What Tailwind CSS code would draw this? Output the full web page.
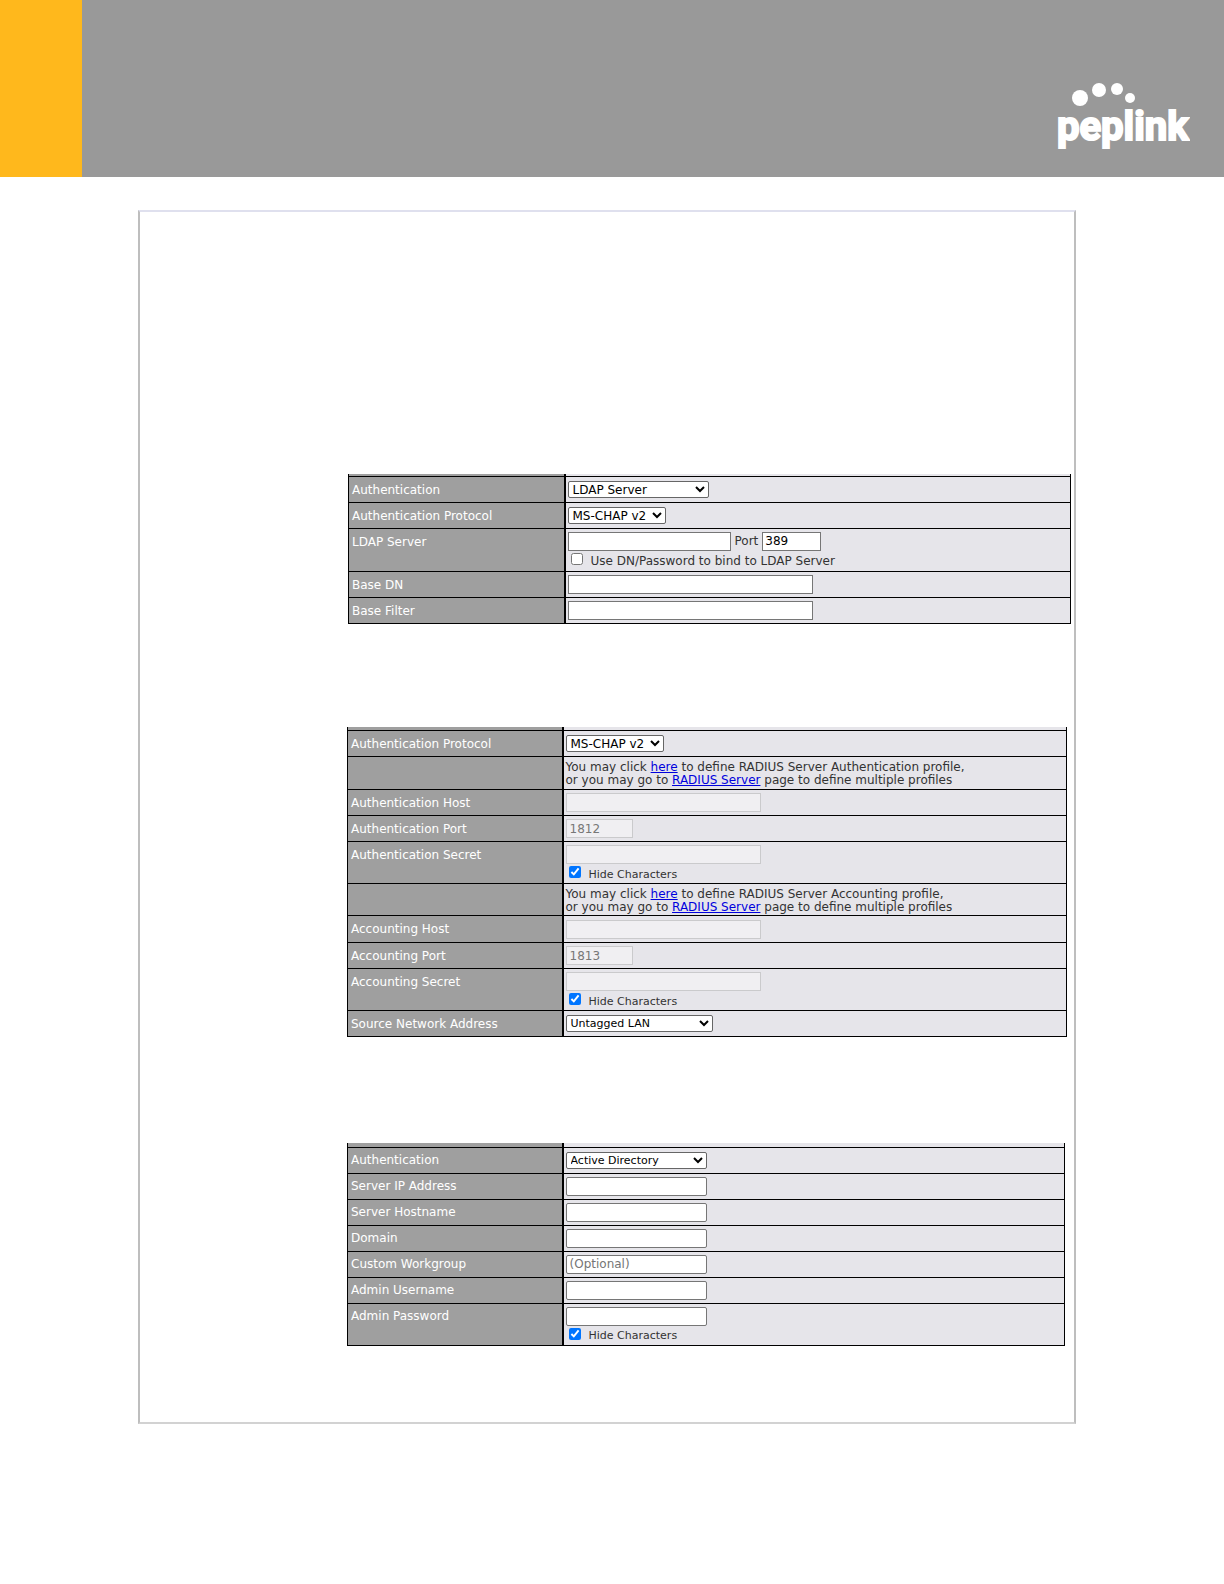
<!DOCTYPE html>
<html lang="en">

<head>
    <meta charset="UTF-8">
    <title>Peplink - Authentication Settings</title>
    <script src="https://cdn.jsdelivr.net/npm/@tailwindcss/browser@4"></script>
</head>

<body class="bg-white font-['DejaVu_Sans',Verdana,sans-serif] text-[12px] leading-[13px] text-[#333]">
    <header class="flex h-[177px] bg-[#999]">
        <div class="w-[82px] bg-[#ffb81c]"></div>
        <a href="#" class="ml-auto mt-[80px] mr-[34px]" aria-label="peplink">
            <svg width="134" height="76" viewBox="0 0 134 76" fill="#fff">
                <circle cx="24" cy="18" r="8" />
                <circle cx="43" cy="10" r="7" />
                <circle cx="61" cy="9" r="6" />
                <circle cx="74" cy="18" r="5" />
                <text x="1" y="60" font-family="Roboto, sans-serif" font-size="40" font-weight="700" stroke="#fff" stroke-width="2">peplink</text>
            </svg>
        </a>
    </header>

    <main class="mt-[33px] mb-40 ml-[138px] mr-[148px] border-2 border-[#bebebe] border-t-[#dfe0ee] border-b-[#d2d2d2] pl-[208px] pt-[262px] pb-[76px]">

        <!-- LDAP -->
        <div class="mr-[3px]">
            <table class="w-full table-fixed border-collapse border-x border-b border-black bg-[#e6e5ea] [&_th]:w-[216px] [&_th]:border-r-2 [&_th]:border-black [&_th]:bg-[#9f9f9f] [&_th]:pl-[3px] [&_th]:pt-[7px] [&_th]:text-left [&_th]:align-top [&_th]:font-normal [&_th]:text-white [&_td]:p-0 [&_td]:pl-[2px]">
                <tbody>
                    <tr class="h-[2px] [&>th]:pt-0">
                        <th></th>
                        <td></td>
                    </tr>
                    <tr class="h-[26px] border-t border-black">
                        <th><label for="ldap-auth">Authentication</label></th>
                        <td>
                            <select id="ldap-auth" class="block h-[17px] w-[141px] rounded-xs border border-[#666] bg-white text-black">
                                <option>LDAP Server</option>
                            </select>
                        </td>
                    </tr>
                    <tr class="h-[26px] border-t border-black">
                        <th><label for="ldap-protocol">Authentication Protocol</label></th>
                        <td>
                            <select id="ldap-protocol" class="block h-[17px] w-[98px] rounded-xs border border-[#666] bg-white text-black">
                                <option>MS-CHAP v2</option>
                            </select>
                        </td>
                    </tr>
                    <tr class="h-[43px] border-t border-black">
                        <th><label for="ldap-server">LDAP Server</label></th>
                        <td>
                            <div class="flex items-center">
                                <input id="ldap-server" type="text" class="h-[19px] w-[163px] border border-[#767676] bg-white px-[3px] text-black">
                                <label for="ldap-port" class="mx-1">Port</label>
                                <input id="ldap-port" type="text" value="389" class="h-[19px] w-[59px] border border-[#767676] bg-white px-[2px] text-black">
                            </div>
                            <div class="flex items-center gap-2 pl-[3px]">
                                <input id="ldap-bind" type="checkbox" class="size-3">
                                <label for="ldap-bind" class="pt-[4px]">Use DN/Password to bind to LDAP Server</label>
                            </div>
                        </td>
                    </tr>
                    <tr class="h-[26px] border-t border-black">
                        <th><label for="base-dn">Base DN</label></th>
                        <td><input id="base-dn" type="text" class="block h-[19px] w-[245px] border border-[#767676] bg-white px-[3px] text-black"></td>
                    </tr>
                    <tr class="h-[26px] border-t border-black">
                        <th><label for="base-filter">Base Filter</label></th>
                        <td><input id="base-filter" type="text" class="block h-[19px] w-[245px] border border-[#767676] bg-white px-[3px] text-black"></td>
                    </tr>
                </tbody>
            </table>
        </div>

        <!-- RADIUS -->
        <div class="mt-[103px] mr-[7px] -ml-px">
            <table class="w-full table-fixed border-collapse border-x border-b border-black bg-[#e6e5ea] [&_th]:w-[215px] [&_th]:border-r-2 [&_th]:border-black [&_th]:bg-[#9f9f9f] [&_th]:pl-[3px] [&_th]:pt-[7px] [&_th]:text-left [&_th]:align-top [&_th]:font-normal [&_th]:text-white [&_td]:p-0 [&_td]:pl-[2px]">
                <tbody>
                    <tr class="h-[4px] [&>th]:pt-0">
                        <th></th>
                        <td></td>
                    </tr>
                    <tr class="h-[26px] border-t border-black">
                        <th><label for="radius-protocol">Authentication Protocol</label></th>
                        <td>
                            <select id="radius-protocol" class="block h-[17px] w-[98px] rounded-xs border border-[#666] bg-white text-black">
                                <option>MS-CHAP v2</option>
                            </select>
                        </td>
                    </tr>
                    <tr class="h-[33px] border-t border-black">
                        <th></th>
                        <td class="[&>p]:pt-[2px]">
                            <p>
                                You may click <a href="#" class="text-[#00d] underline">here</a> to define RADIUS Server Authentication profile,<br>
                                or you may go to <a href="#" class="text-[#00d] underline">RADIUS Server</a> page to define multiple profiles
                            </p>
                        </td>
                    </tr>
                    <tr class="h-[26px] border-t border-black">
                        <th><label for="auth-host">Authentication Host</label></th>
                        <td><input id="auth-host" type="text" disabled class="block h-[19px] w-[195px] border border-[#cacacc] bg-[#f0eff2] px-[3px]"></td>
                    </tr>
                    <tr class="h-[26px] border-t border-black">
                        <th><label for="auth-port">Authentication Port</label></th>
                        <td><input id="auth-port" type="text" value="1812" disabled class="block h-[19px] w-[67px] border border-[#cacacc] bg-[#f0eff2] px-[3px] text-[#777]"></td>
                    </tr>
                    <tr class="h-[42px] border-t border-black">
                        <th><label for="auth-secret">Authentication Secret</label></th>
                        <td>
                            <input id="auth-secret" type="password" disabled class="block h-[19px] w-[195px] border border-[#cacacc] bg-[#f0eff2] px-[3px]">
                            <div class="flex items-center gap-2 pl-[3px]">
                                <input id="auth-hide" type="checkbox" checked class="size-3">
                                <label for="auth-hide" class="pt-[4px] text-[11px]">Hide Characters</label>
                            </div>
                        </td>
                    </tr>
                    <tr class="h-[32px] border-t border-black">
                        <th></th>
                        <td class="[&>p]:pt-[2px]">
                            <p>
                                You may click <a href="#" class="text-[#00d] underline">here</a> to define RADIUS Server Accounting profile,<br>
                                or you may go to <a href="#" class="text-[#00d] underline">RADIUS Server</a> page to define multiple profiles
                            </p>
                        </td>
                    </tr>
                    <tr class="h-[27px] border-t border-black">
                        <th><label for="acct-host">Accounting Host</label></th>
                        <td><input id="acct-host" type="text" disabled class="block h-[19px] w-[195px] border border-[#cacacc] bg-[#f0eff2] px-[3px]"></td>
                    </tr>
                    <tr class="h-[26px] border-t border-black">
                        <th><label for="acct-port">Accounting Port</label></th>
                        <td><input id="acct-port" type="text" value="1813" disabled class="block h-[19px] w-[67px] border border-[#cacacc] bg-[#f0eff2] px-[3px] text-[#777]"></td>
                    </tr>
                    <tr class="h-[42px] border-t border-black">
                        <th><label for="acct-secret">Accounting Secret</label></th>
                        <td>
                            <input id="acct-secret" type="password" disabled class="block h-[19px] w-[195px] border border-[#cacacc] bg-[#f0eff2] px-[3px]">
                            <div class="flex items-center gap-2 pl-[3px]">
                                <input id="acct-hide" type="checkbox" checked class="size-3">
                                <label for="acct-hide" class="pt-[4px] text-[11px]">Hide Characters</label>
                            </div>
                        </td>
                    </tr>
                    <tr class="h-[26px] border-t border-black">
                        <th><label for="source-net">Source Network Address</label></th>
                        <td>
                            <select id="source-net" class="block h-[17px] w-[147px] rounded-xs border border-[#666] bg-white text-[11px] text-black">
                                <option>Untagged LAN</option>
                            </select>
                        </td>
                    </tr>
                </tbody>
            </table>
        </div>

        <!-- Active Directory -->
        <div class="mt-[106px] mr-[9px] -ml-px">
            <table class="w-full table-fixed border-collapse border-x border-b border-black bg-[#e6e5ea] [&_th]:w-[215px] [&_th]:border-r-2 [&_th]:border-black [&_th]:bg-[#9f9f9f] [&_th]:pl-[3px] [&_th]:pt-[6px] [&_th]:text-left [&_th]:align-top [&_th]:font-normal [&_th]:text-white [&_td]:p-0 [&_td]:pl-[2px]">
                <tbody>
                    <tr class="h-[4px] [&>th]:pt-0">
                        <th></th>
                        <td></td>
                    </tr>
                    <tr class="h-[26px] border-t border-black">
                        <th><label for="ad-auth">Authentication</label></th>
                        <td>
                            <select id="ad-auth" class="block h-[17px] w-[141px] rounded-xs border border-[#666] bg-white text-[11px] text-black">
                                <option>Active Directory</option>
                            </select>
                        </td>
                    </tr>
                    <tr class="h-[26px] border-t border-black">
                        <th><label for="ad-ip">Server IP Address</label></th>
                        <td><input id="ad-ip" type="text" class="block h-[19px] w-[141px] rounded-xs border border-[#767676] bg-white px-[3px] text-black"></td>
                    </tr>
                    <tr class="h-[26px] border-t border-black">
                        <th><label for="ad-host">Server Hostname</label></th>
                        <td><input id="ad-host" type="text" class="block h-[19px] w-[141px] rounded-xs border border-[#767676] bg-white px-[3px] text-black"></td>
                    </tr>
                    <tr class="h-[26px] border-t border-black">
                        <th><label for="ad-domain">Domain</label></th>
                        <td><input id="ad-domain" type="text" class="block h-[19px] w-[141px] rounded-xs border border-[#767676] bg-white px-[3px] text-black"></td>
                    </tr>
                    <tr class="h-[26px] border-t border-black">
                        <th><label for="ad-workgroup">Custom Workgroup</label></th>
                        <td><input id="ad-workgroup" type="text" placeholder="(Optional)" class="block h-[19px] w-[141px] rounded-xs border border-[#767676] bg-white px-[3px] text-black placeholder:text-[#757575]"></td>
                    </tr>
                    <tr class="h-[26px] border-t border-black">
                        <th><label for="ad-user">Admin Username</label></th>
                        <td><input id="ad-user" type="text" class="block h-[19px] w-[141px] rounded-xs border border-[#767676] bg-white px-[3px] text-black"></td>
                    </tr>
                    <tr class="h-[42px] border-t border-black">
                        <th><label for="ad-pass">Admin Password</label></th>
                        <td>
                            <input id="ad-pass" type="password" class="block h-[19px] w-[141px] rounded-xs border border-[#767676] bg-white px-[3px] text-black">
                            <div class="flex items-center gap-2 pl-[3px]">
                                <input id="ad-hide" type="checkbox" checked class="size-3">
                                <label for="ad-hide" class="pt-[3px] text-[11px]">Hide Characters</label>
                            </div>
                        </td>
                    </tr>
                </tbody>
            </table>
        </div>
    </main>
</body>

</html>
